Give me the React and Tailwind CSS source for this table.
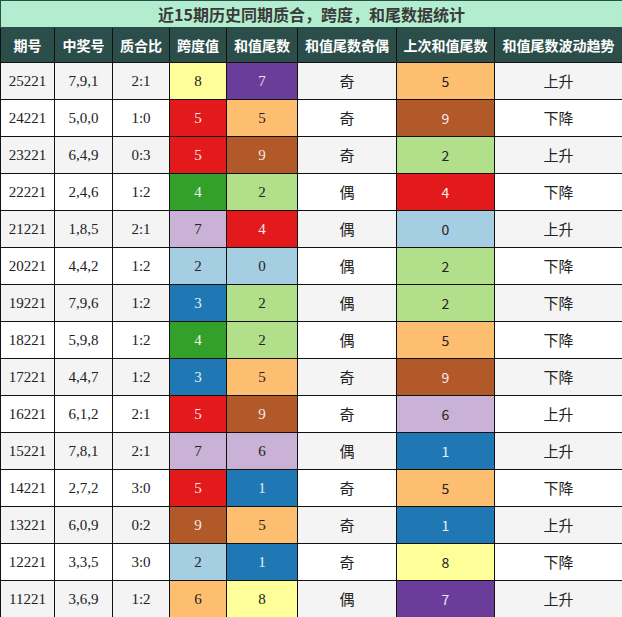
import React from 'react';

const C = {
  lb: 'bg-[#a6cee3] text-[#222]',
  b: 'bg-[#1f78b4] text-[#e8eef4]',
  lg: 'bg-[#b2df8a] text-[#222]',
  g: 'bg-[#33a02c] text-[#eef6ec]',
  r: 'bg-[#e31a1c] text-[#fbe9e9]',
  o: 'bg-[#fdbf6f] text-[#222]',
  lv: 'bg-[#cab2d6] text-[#222]',
  p: 'bg-[#6a3d9a] text-[#ece6f2]',
  y: 'bg-[#ffff99] text-[#222]',
  br: 'bg-[#b15928] text-[#f6ebe4]',
};

// span column colours
const spanColor = { 2: C.lb, 3: C.b, 4: C.g, 5: C.r, 6: C.o, 7: C.lv, 8: C.y, 9: C.br };
// sum-tail colours (also used for the previous tail)
const tailColor = { 0: C.lb, 1: C.b, 2: C.lg, 4: C.r, 5: C.o, 6: C.lv, 7: C.p, 8: C.y, 9: C.br };

const rows = [
  ['25221', '7,9,1', '2:1', 8, 7, '奇', 5, '上升'],
  ['24221', '5,0,0', '1:0', 5, 5, '奇', 9, '下降'],
  ['23221', '6,4,9', '0:3', 5, 9, '奇', 2, '上升'],
  ['22221', '2,4,6', '1:2', 4, 2, '偶', 4, '下降'],
  ['21221', '1,8,5', '2:1', 7, 4, '偶', 0, '上升'],
  ['20221', '4,4,2', '1:2', 2, 0, '偶', 2, '下降'],
  ['19221', '7,9,6', '1:2', 3, 2, '偶', 2, '下降'],
  ['18221', '5,9,8', '1:2', 4, 2, '偶', 5, '下降'],
  ['17221', '4,4,7', '1:2', 3, 5, '奇', 9, '下降'],
  ['16221', '6,1,2', '2:1', 5, 9, '奇', 6, '上升'],
  ['15221', '7,8,1', '2:1', 7, 6, '偶', 1, '上升'],
  ['14221', '2,7,2', '3:0', 5, 1, '奇', 5, '下降'],
  ['13221', '6,0,9', '0:2', 9, 5, '奇', 1, '上升'],
  ['12221', '3,3,5', '3:0', 2, 1, '奇', 8, '下降'],
  ['11221', '3,6,9', '1:2', 6, 8, '偶', 7, '上升'],
];

const headers = ['期号', '中奖号', '质合比', '跨度值', '和值尾数', '和值尾数奇偶', '上次和值尾数', '和值尾数波动趋势'];
const widths = ['w-[54px]', 'w-[58px]', 'w-[57px]', 'w-[57px]', 'w-[71px]', 'w-[99px]', 'w-[98px]', 'w-[128px]'];

const serif = "font-['Liberation_Serif',serif]";
const sans = "font-['Noto_Sans_CJK_SC','Noto_Sans',sans-serif]";

export default function App() {
  return (
    <div className="w-[622px] h-[617px] bg-white overflow-hidden">
      <table className="w-[622px] table-fixed border-collapse text-center">
        <colgroup>
          {widths.map((w, i) => <col key={i} className={w} />)}
        </colgroup>
        <thead>
          <tr className="h-[27px]">
            <th colSpan={8} className={`bg-[#b3edcf] border border-[#2c4e4a] text-[#3a3a3a] text-[16px] font-bold leading-none ${sans}`}>
              近15期历史同期质合，跨度，和尾数据统计
            </th>
          </tr>
          <tr className="h-[35px]">
            {headers.map(h => (
              <th key={h} className={`bg-[#2c4e4a] border border-[#111] text-white text-[14px] font-bold ${sans}`}>{h}</th>
            ))}
          </tr>
        </thead>
        <tbody>
          {rows.map((r, i) => {
            const bg = i % 2 === 0 ? 'bg-[#f4f4f4]' : 'bg-white';
            const cell = 'border border-[#111] p-0';
            return (
              <tr key={r[0]} className="h-[37px]">
                <td className={`${cell} ${bg} ${serif} text-[15px] text-[#222]`}>{r[0]}</td>
                <td className={`${cell} ${bg} ${serif} text-[15px] text-[#222]`}>{r[1]}</td>
                <td className={`${cell} ${bg} ${serif} text-[15px] text-[#222]`}>{r[2]}</td>
                <td className={`${cell} ${spanColor[r[3]]} ${serif} text-[15px]`}>{r[3]}</td>
                <td className={`${cell} ${tailColor[r[4]]} ${serif} text-[15px]`}>{r[4]}</td>
                <td className={`${cell} ${bg} ${sans} text-[15px] text-[#222]`}>{r[5]}</td>
                <td className={`${cell} ${tailColor[r[6]]} ${sans} font-normal text-[14px]`}>{r[6]}</td>
                <td className={`${cell} ${bg} ${sans} text-[15px] text-[#222]`}>{r[7]}</td>
              </tr>
            );
          })}
        </tbody>
      </table>
    </div>
  );
}
